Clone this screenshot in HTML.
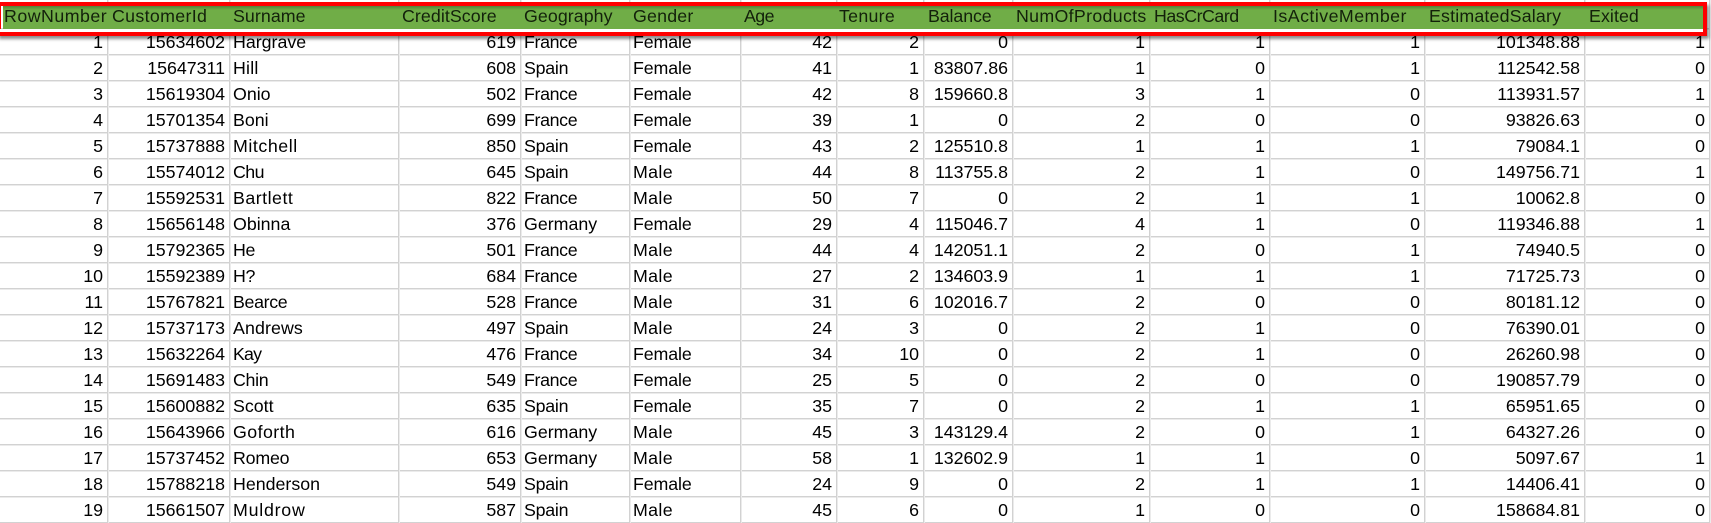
<!DOCTYPE html>
<html><head><meta charset="utf-8"><style>
html,body{margin:0;padding:0;background:#fff}
#p{position:relative;width:1711px;height:523px;overflow:hidden;background:#fff;font:17.8px/26px "Liberation Sans",sans-serif;color:#000}
table{position:absolute;left:0;top:28.5px;border-collapse:collapse;table-layout:fixed;width:1709px}
td{padding:0 4px;height:26px;line-height:26px;white-space:nowrap;overflow:hidden;box-sizing:border-box;text-align:right}
td.l{text-align:left}
td.fr{letter-spacing:-.35px}td.sp{letter-spacing:-.24px}td.fe{letter-spacing:-.1px}td.ma{letter-spacing:.35px}
.v{position:absolute;top:0;width:2px;height:523px;background:linear-gradient(90deg,#d2d2d2 50%,#ebebeb 50%)}
.h{position:absolute;left:0;width:1711px;height:2px;background:linear-gradient(#d2d2d2 50%,#ebebeb 50%)}
.g{position:absolute;left:3px;top:6px;width:1700px;height:23px;background:linear-gradient(#55803a 0,#64983f 2px,#70ad47 4px,#70ad47 100%)}
.w{position:absolute;left:0;top:29px;width:1703px;height:3px;background:#fff}
.r{position:absolute;left:-3px;top:2px;width:1710px;height:34px;box-sizing:border-box;border:4px solid #f00;box-shadow:2px 3px 3px rgba(0,0,0,.45)}
.t{position:absolute;top:2.8px;color:#13210b;white-space:nowrap}
</style></head><body><div id="p">
<div class="h" style="top:28px"></div><div class="h" style="top:54px"></div><div class="h" style="top:80px"></div><div class="h" style="top:106px"></div><div class="h" style="top:132px"></div><div class="h" style="top:158px"></div><div class="h" style="top:184px"></div><div class="h" style="top:210px"></div><div class="h" style="top:236px"></div><div class="h" style="top:262px"></div><div class="h" style="top:288px"></div><div class="h" style="top:314px"></div><div class="h" style="top:340px"></div><div class="h" style="top:366px"></div><div class="h" style="top:392px"></div><div class="h" style="top:418px"></div><div class="h" style="top:444px"></div><div class="h" style="top:470px"></div><div class="h" style="top:496px"></div><div class="h" style="top:522px"></div>
<div class="v" style="left:107px"></div><div class="v" style="left:229px"></div><div class="v" style="left:398px"></div><div class="v" style="left:520px"></div><div class="v" style="left:629px"></div><div class="v" style="left:740px"></div><div class="v" style="left:836px"></div><div class="v" style="left:923px"></div><div class="v" style="left:1012px"></div><div class="v" style="left:1149px"></div><div class="v" style="left:1269px"></div><div class="v" style="left:1424px"></div><div class="v" style="left:1584px"></div><div class="v" style="left:1709px"></div>
<table><colgroup><col style="width:107px"><col style="width:122px"><col style="width:169px"><col style="width:122px"><col style="width:109px"><col style="width:111px"><col style="width:96px"><col style="width:87px"><col style="width:89px"><col style="width:137px"><col style="width:120px"><col style="width:155px"><col style="width:160px"><col style="width:125px"></colgroup>
<tr><td>1</td><td>15634602</td><td class="l">Hargrave</td><td>619</td><td class="l fr">France</td><td class="l fe">Female</td><td>42</td><td>2</td><td>0</td><td>1</td><td>1</td><td>1</td><td>101348.88</td><td>1</td></tr>
<tr><td>2</td><td>15647311</td><td class="l" style="letter-spacing:.2px">Hill</td><td>608</td><td class="l sp">Spain</td><td class="l fe">Female</td><td>41</td><td>1</td><td>83807.86</td><td>1</td><td>0</td><td>1</td><td>112542.58</td><td>0</td></tr>
<tr><td>3</td><td>15619304</td><td class="l">Onio</td><td>502</td><td class="l fr">France</td><td class="l fe">Female</td><td>42</td><td>8</td><td>159660.8</td><td>3</td><td>1</td><td>0</td><td>113931.57</td><td>1</td></tr>
<tr><td>4</td><td>15701354</td><td class="l">Boni</td><td>699</td><td class="l fr">France</td><td class="l fe">Female</td><td>39</td><td>1</td><td>0</td><td>2</td><td>0</td><td>0</td><td>93826.63</td><td>0</td></tr>
<tr><td>5</td><td>15737888</td><td class="l" style="letter-spacing:.56px">Mitchell</td><td>850</td><td class="l sp">Spain</td><td class="l fe">Female</td><td>43</td><td>2</td><td>125510.8</td><td>1</td><td>1</td><td>1</td><td>79084.1</td><td>0</td></tr>
<tr><td>6</td><td>15574012</td><td class="l" style="letter-spacing:-.57px">Chu</td><td>645</td><td class="l sp">Spain</td><td class="l ma">Male</td><td>44</td><td>8</td><td>113755.8</td><td>2</td><td>1</td><td>0</td><td>149756.71</td><td>1</td></tr>
<tr><td>7</td><td>15592531</td><td class="l" style="letter-spacing:.5px">Bartlett</td><td>822</td><td class="l fr">France</td><td class="l ma">Male</td><td>50</td><td>7</td><td>0</td><td>2</td><td>1</td><td>1</td><td>10062.8</td><td>0</td></tr>
<tr><td>8</td><td>15656148</td><td class="l">Obinna</td><td>376</td><td class="l">Germany</td><td class="l fe">Female</td><td>29</td><td>4</td><td>115046.7</td><td>4</td><td>1</td><td>0</td><td>119346.88</td><td>1</td></tr>
<tr><td>9</td><td>15792365</td><td class="l" style="letter-spacing:-.4px">He</td><td>501</td><td class="l fr">France</td><td class="l ma">Male</td><td>44</td><td>4</td><td>142051.1</td><td>2</td><td>0</td><td>1</td><td>74940.5</td><td>0</td></tr>
<tr><td>10</td><td>15592389</td><td class="l" style="letter-spacing:-.4px">H?</td><td>684</td><td class="l fr">France</td><td class="l ma">Male</td><td>27</td><td>2</td><td>134603.9</td><td>1</td><td>1</td><td>1</td><td>71725.73</td><td>0</td></tr>
<tr><td>11</td><td>15767821</td><td class="l" style="letter-spacing:-.33px">Bearce</td><td>528</td><td class="l fr">France</td><td class="l ma">Male</td><td>31</td><td>6</td><td>102016.7</td><td>2</td><td>0</td><td>0</td><td>80181.12</td><td>0</td></tr>
<tr><td>12</td><td>15737173</td><td class="l" style="letter-spacing:.1px">Andrews</td><td>497</td><td class="l sp">Spain</td><td class="l ma">Male</td><td>24</td><td>3</td><td>0</td><td>2</td><td>1</td><td>0</td><td>76390.01</td><td>0</td></tr>
<tr><td>13</td><td>15632264</td><td class="l" style="letter-spacing:-.8px">Kay</td><td>476</td><td class="l fr">France</td><td class="l fe">Female</td><td>34</td><td>10</td><td>0</td><td>2</td><td>1</td><td>0</td><td>26260.98</td><td>0</td></tr>
<tr><td>14</td><td>15691483</td><td class="l" style="letter-spacing:-.3px">Chin</td><td>549</td><td class="l fr">France</td><td class="l fe">Female</td><td>25</td><td>5</td><td>0</td><td>2</td><td>0</td><td>0</td><td>190857.79</td><td>0</td></tr>
<tr><td>15</td><td>15600882</td><td class="l">Scott</td><td>635</td><td class="l sp">Spain</td><td class="l fe">Female</td><td>35</td><td>7</td><td>0</td><td>2</td><td>1</td><td>1</td><td>65951.65</td><td>0</td></tr>
<tr><td>16</td><td>15643966</td><td class="l" style="letter-spacing:.43px">Goforth</td><td>616</td><td class="l">Germany</td><td class="l ma">Male</td><td>45</td><td>3</td><td>143129.4</td><td>2</td><td>0</td><td>1</td><td>64327.26</td><td>0</td></tr>
<tr><td>17</td><td>15737452</td><td class="l" style="letter-spacing:-.2px">Romeo</td><td>653</td><td class="l">Germany</td><td class="l ma">Male</td><td>58</td><td>1</td><td>132602.9</td><td>1</td><td>1</td><td>0</td><td>5097.67</td><td>1</td></tr>
<tr><td>18</td><td>15788218</td><td class="l">Henderson</td><td>549</td><td class="l sp">Spain</td><td class="l fe">Female</td><td>24</td><td>9</td><td>0</td><td>2</td><td>1</td><td>1</td><td>14406.41</td><td>0</td></tr>
<tr><td>19</td><td>15661507</td><td class="l" style="letter-spacing:.77px">Muldrow</td><td>587</td><td class="l sp">Spain</td><td class="l ma">Male</td><td>45</td><td>6</td><td>0</td><td>1</td><td>0</td><td>0</td><td>158684.81</td><td>0</td></tr>
</table>
<div class="r"></div><div class="g"></div><div class="w"></div>
<div class="t" style="left:4px;letter-spacing:.49px">RowNumber</div><div class="t" style="left:112px;letter-spacing:.33px">CustomerId</div><div class="t" style="left:233px;letter-spacing:.07px">Surname</div><div class="t" style="left:402px;letter-spacing:.07px">CreditScore</div><div class="t" style="left:524px;letter-spacing:.07px">Geography</div><div class="t" style="left:633px;letter-spacing:.2px">Gender</div><div class="t" style="left:744px;letter-spacing:-.55px">Age</div><div class="t" style="left:839px;letter-spacing:.27px">Tenure</div><div class="t" style="left:928px;letter-spacing:-.1px">Balance</div><div class="t" style="left:1016px;letter-spacing:.32px">NumOfProducts</div><div class="t" style="left:1154px;letter-spacing:-.47px">HasCrCard</div><div class="t" style="left:1273px;letter-spacing:.46px">IsActiveMember</div><div class="t" style="left:1429px;letter-spacing:.18px">EstimatedSalary</div><div class="t" style="left:1589px;letter-spacing:.08px">Exited</div>
</div></body></html>
